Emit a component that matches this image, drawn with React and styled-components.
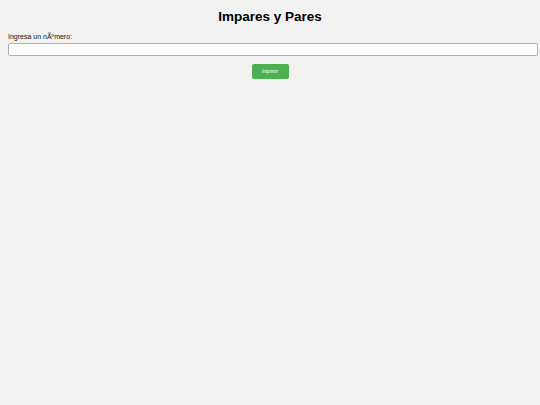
import React from "react";
import styled, { createGlobalStyle } from "styled-components";

const Global = createGlobalStyle`
  html, body { margin: 0; padding: 0; background: #f2f2f2; }
  body { font-family: "Liberation Sans", Arial, sans-serif; -webkit-font-smoothing: antialiased; }
`;

const Page = styled.div`
  padding: 8px;
  display: flex;
  flex-direction: column;
  align-items: flex-start;
`;

const Title = styled.h1`
  align-self: stretch;
  margin: 0 0 8px;
  text-align: center;
  font-size: 13.5px;
  line-height: 17px;
  font-weight: bold;
  color: #000;
`;

const Label = styled.label`
  font-size: 7px;
  line-height: 8px;
  color: #111;
  margin-bottom: 2px;
`;

const Input = styled.input`
  box-sizing: content-box;
  width: 100%;
  height: 11px;
  border: 1px solid #b0b0b0;
  border-radius: 2px;
  background: #fff;
  margin: 0;
  padding: 0 2px;
`;

const Actions = styled.div`
  align-self: stretch;
  display: flex;
  justify-content: center;
  margin-top: 8px;
`;

const Button = styled.button`
  box-sizing: border-box;
  width: 37px;
  height: 15px;
  background: #4caf50;
  color: #fff;
  border: none;
  border-radius: 2px;
  font-family: "Liberation Sans", Arial, sans-serif;
  font-size: 4.5px;
  padding: 0;
`;

export default function App() {
  return (
    <>
      <Global />
      <Page>
        <Title>Impares y Pares</Title>
        <Label htmlFor="n">Ingresa un nÃºmero:</Label>
        <Input id="n" type="text" />
        <Actions>
          <Button>Imprimir</Button>
        </Actions>
      </Page>
    </>
  );
}
